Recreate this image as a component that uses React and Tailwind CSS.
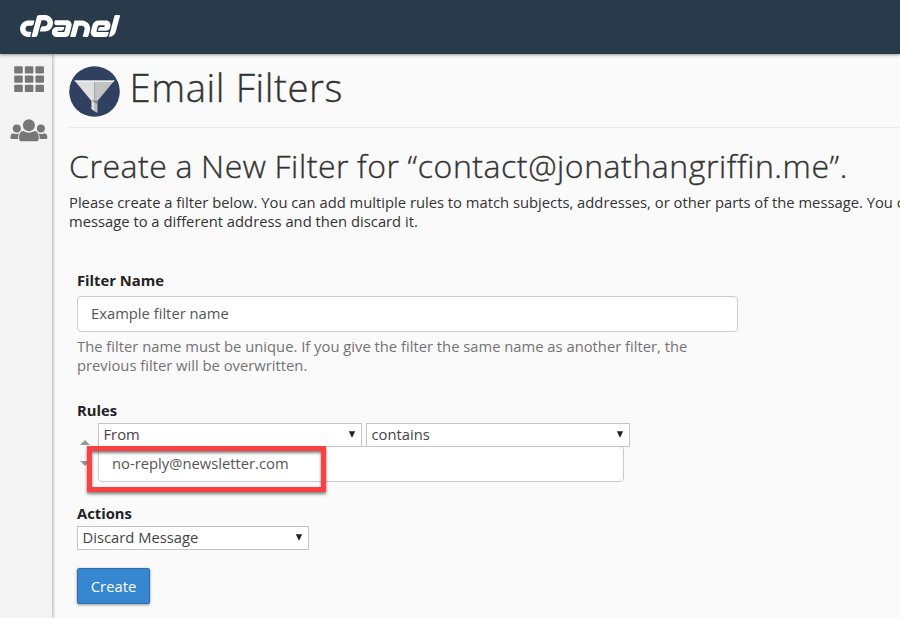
import { FaCpanel } from "react-icons/fa";

function GridIcon() {
  return (
    <svg width="30" height="27" viewBox="0 0 30 27" fill="#777777">
      {[0.2, 9.5, 18.8].map((y) =>
        [0.2, 10.8, 21.4].map((x) => <rect key={`${x}-${y}`} x={x} y={y} width="8.600" height="7.300" rx="1.200" />)
      )}
    </svg>
  );
}

function UsersIcon() {
  return (
    <svg width="38" height="23" viewBox="0 0 38 23" fill="#777777">
      <circle cx="6.800" cy="9.600" r="4" />
      <circle cx="30.900" cy="9.600" r="4" />
      <path d="M3.400 14.200c2 1.200 4.300 1.200 6.100 0.100-1.200 1.400-1.300 3-1.300 5.700H1.800c-1 0-1.500-.5-1.400-1.400.1-2.200.8-4.400 3-4.400z" />
      <path d="M34.400 14.200c-2 1.200-4.300 1.200-6.100.1 1.200 1.400 1.300 3 1.300 5.700h6.400c1 0 1.500-.5 1.400-1.400-.1-2.200-.8-4.400-3-4.400z" />
      <circle cx="18.900" cy="6.200" r="6" />
      <path d="M13.500 12c3.300 2.300 7.500 2.300 10.800 0 3.400 0 4.600 3.200 4.500 7.500 0 1.900-1 2.800-2.600 2.800H11.700c-1.700 0-2.600-.9-2.600-2.800-.1-4.300 1-7.500 4.400-7.500z" />
    </svg>
  );
}

function FunnelIcon() {
  return (
    <svg className="shrink-0" width="51" height="51" viewBox="0 0 51 51">
      <circle cx="25.500" cy="25.500" r="25.300" fill="#2f4060" />
      <path d="M5.500 14.500H25.500V35H22.500Z" fill="#dfdfdf" />
      <path d="M25.500 14.500H45.500L28.500 35H25.500Z" fill="#c2c2c2" />
      <path d="M5.500 14.500H45.500L44.500 15.900H6.500Z" fill="#efefef" />
      <path d="M22.400 34.500H25.700V45.500L22.400 43Z" fill="#e0e0e0" />
      <path d="M25 34.500H28.500V47L25 45Z" fill="#bcbcbc" />
      <path d="M22.500 34.500H28.500L28 38Z" fill="#858585" />
    </svg>
  );
}

function Select({ className, children }) {
  return (
    <div className={`flex h-[24px] items-center justify-between border border-[#c4c4c4] bg-white pr-[5px] pb-px pl-[4.500px] text-[#444] ${className}`}>
      <span>{children}</span>
      <svg width="8" height="7" viewBox="0 0 8 7">
        <path d="M0.800 0.300H7.200L4 6.700Z" fill="#222" />
      </svg>
    </div>
  );
}

export default function App() {
  return (
    <div className="flex h-[618px] w-[900px] flex-col overflow-hidden bg-[#fafafa] font-['Open_Sans','Noto_Sans',sans-serif] text-[14.77px] leading-[19px] text-[#333]">
      <header className="relative z-10 flex h-[54px] shrink-0 items-center bg-[#293a4a] pl-[20px] shadow-[0_1px_3px_rgba(0,0,0,0.4)]">
        <div className="flex h-[24px] items-center">
          <FaCpanel className="text-white" size={100} />
        </div>
      </header>
      <div className="flex min-h-0 flex-1">
        <aside className="flex w-[52px] shrink-0 flex-col items-center gap-[26px] bg-[#f4f4f4] pt-[12px] pl-[6px] shadow-[1px_0_3px_rgba(0,0,0,0.3)]">
          <GridIcon />
          <UsersIcon />
        </aside>
        <main className="flex min-w-0 flex-1 flex-col pl-[17px]">
          <div className="flex h-[74px] shrink-0 items-start gap-[9.5px] border-b border-[#ececec] pt-[12px]">
            <FunnelIcon />
            <h1 className="text-[38.300px] leading-[43px] font-light tracking-[0.600px] whitespace-nowrap [-webkit-text-stroke:0.35px_#333]">Email Filters</h1>
          </div>
          <h2 className="mt-[17px] text-[32px] leading-[41px] font-light tracking-[0.560px] [word-spacing:-0.87px] whitespace-nowrap [-webkit-text-stroke:0.35px_#333]">
            Create a New Filter for “contact@jonathangriffin.me”.
          </h2>
          <p className="mt-[7px] whitespace-nowrap">
            Please create a filter below. You can add multiple rules to match subjects, addresses, or other parts of the message. You c
            <br />
            message to a different address and then discard it.
          </p>
          <form className="flex flex-col items-start pl-[8px] pt-[40px]">
            <label className="font-bold text-[#222]">Filter Name</label>
            <div className="mt-[6px] flex h-[36px] w-[661px] items-center rounded-[4px] border border-[#ccc] bg-white pb-px pl-[13px] text-[#555]">
              Example filter name
            </div>
            <p className="mt-[5px] whitespace-nowrap text-[#737373]">
              The filter name must be unique. If you give the filter the same name as another filter, the
              <br />
              previous filter will be overwritten.
            </p>
            <label className="mt-[26px] font-bold text-[#222]">Rules</label>
            <div className="mt-[3px] flex">
              <div className="flex w-[21px] flex-col gap-[16px] pt-[17px] pl-[3px]">
                <svg width="10" height="5" viewBox="0 0 10 5">
                  <path d="M0 5L5 0L10 5Z" fill="#999" />
                </svg>
                <svg width="10" height="5" viewBox="0 0 10 5">
                  <path d="M0 0H10L5 5Z" fill="#999" />
                </svg>
              </div>
              <div className="relative">
                <div className="flex gap-[4px]">
                  <Select className="w-[264px]">From</Select>
                  <Select className="w-[264px]">contains</Select>
                </div>
                <div className="-mt-px flex h-[36px] w-[526px] items-center rounded-[4px] border border-[#ccc] bg-white pb-px pl-[13px] text-[#555]">
                  no-reply@newsletter.com
                </div>
                <div className="absolute top-[23px] left-[-11px] h-[46px] w-[239px] border-[5px] border-[#f94144] shadow-[0_2px_3px_rgba(0,0,0,0.5),inset_0_2px_3px_rgba(0,0,0,0.5)]" />
              </div>
            </div>
            <label className="mt-[22px] font-bold text-[#222]">Actions</label>
            <Select className="mt-[3px] w-[232px]">Discard Message</Select>
            <button className="mt-[18px] h-[36px] w-[73px] rounded-[2px] border border-[#2a70b3] bg-[#3787d0] text-white shadow-[0_1px_3px_rgba(0,0,0,0.4)]">
              Create
            </button>
          </form>
        </main>
      </div>
    </div>
  );
}
